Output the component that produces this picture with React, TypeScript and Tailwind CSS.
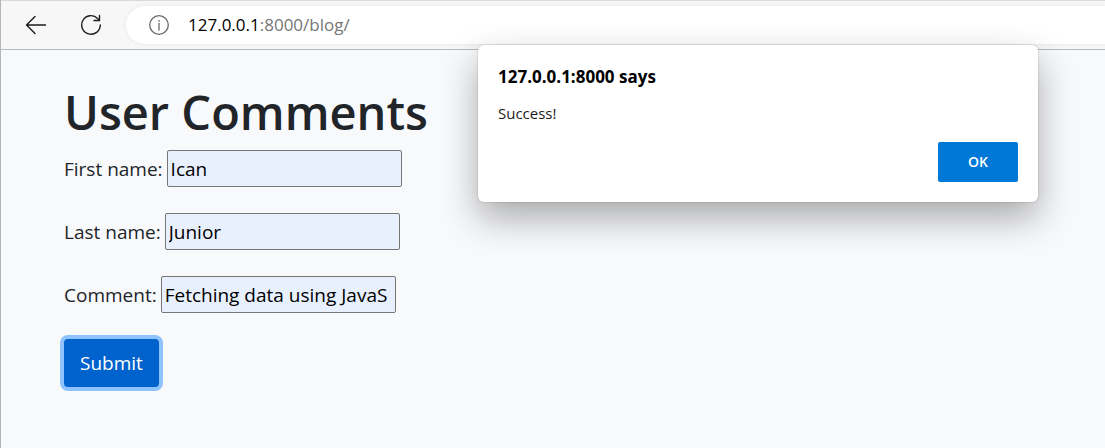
import type { ReactNode } from "react";

function ToolbarButton({ label, children }: { label: string; children: ReactNode }) {
  return (
    <button
      type="button"
      aria-label={label}
      className="flex size-8 items-center justify-center text-[#1b1b1b]"
    >
      {children}
    </button>
  );
}

function Toolbar() {
  return (
    <header className="flex h-[50px] items-center border-t border-b border-t-[#d9d9d9] border-b-[#b9babd] bg-[#f7f7f7] pl-[19px]">
      <div className="flex gap-[23px]">
        <ToolbarButton label="Back">
          <svg
            width="22"
            height="20"
            viewBox="0 0 22 20"
            fill="none"
            stroke="currentColor"
            strokeWidth="1.4"
            strokeLinecap="round"
            strokeLinejoin="round"
          >
            <path d="M20.5 10H1.5M10 1.5L1.5 10L10 18.5" />
          </svg>
        </ToolbarButton>
        <ToolbarButton label="Refresh">
          <svg
            width="22"
            height="22"
            viewBox="0 0 22 22"
            fill="none"
            stroke="currentColor"
            strokeWidth="1.4"
            strokeLinecap="round"
            strokeLinejoin="round"
          >
            <path d="M20.3 11A9.3 9.3 0 1 1 17.6 4.4L19.4 6.4" />
            <path d="M19.5 1.5V6.5H14" />
          </svg>
        </ToolbarButton>
      </div>
      <div className="ml-[19px] flex h-[38px] flex-1 items-center gap-[18px] rounded-l-full bg-white pl-[22px] shadow-[0_0_4px_rgba(0,0,0,0.07)]">
        <svg
          width="22"
          height="22"
          viewBox="0 0 22 22"
          fill="none"
          stroke="#6b6b6b"
          strokeWidth="1.3"
          aria-hidden="true"
        >
          <circle cx="11" cy="11" r="9.3" />
          <path d="M11 9.5V16" strokeLinecap="round" />
          <circle cx="11" cy="6.8" r="0.9" fill="#6b6b6b" stroke="none" />
        </svg>
        <p className="text-[17px] leading-6 text-[#767676]">
          <span className="text-black">127.0.0.1</span>:8000/blog/
        </p>
      </div>
    </header>
  );
}

function Field({ id, label, value }: { id: string; label: string; value: string }) {
  return (
    <div className="flex items-center gap-1">
      <label htmlFor={id} className="text-[19px] leading-7 text-[#212529]">
        {label}
      </label>
      <input
        id={id}
        name={id}
        type="text"
        defaultValue={value}
        className="h-[37px] w-[235px] rounded-[2px] border border-[#767676] bg-[#e8f0fe] px-[3px] text-[19px] text-black outline-none"
      />
    </div>
  );
}

function AlertDialog() {
  return (
    <div
      role="alertdialog"
      aria-labelledby="alert-title"
      aria-describedby="alert-message"
      className="absolute top-[45px] left-[477px] flex w-[560px] flex-col rounded-md bg-white p-5 shadow-[0_0_2px_rgba(0,0,0,0.25),0_16px_36px_rgba(0,0,0,0.32)]"
    >
      <h2 id="alert-title" className="text-[17px] leading-6 font-bold text-black">
        127.0.0.1:8000 says
      </h2>
      <p id="alert-message" className="mt-3 text-[15px] leading-6 text-[#1b1b1b]">
        Success!
      </p>
      <button
        type="button"
        className="mt-[17px] h-10 w-20 self-end rounded-[2px] bg-[#0078d7] text-sm font-semibold text-white"
      >
        OK
      </button>
    </div>
  );
}

export default function App() {
  return (
    <div className="relative flex min-h-screen flex-col overflow-hidden border-l border-[#b4b5b8] bg-[#f8f9fb] font-['Open_Sans','Noto_Sans',sans-serif]">
      <Toolbar />
      <main className="px-[63px] pt-8">
        <h1 className="text-[47px] leading-[60px] font-semibold text-[#212529]">User Comments</h1>
        <form className="mt-2 flex flex-col items-start gap-[26px]" onSubmit={(e) => e.preventDefault()}>
          <Field id="first-name" label="First name:" value="Ican" />
          <Field id="last-name" label="Last name:" value="Junior" />
          <Field id="comment" label="Comment:" value="Fetching data using JavaS" />
          <button
            type="submit"
            className="h-12 rounded-[4px] bg-[#0062cc] px-4 text-[19px] text-white ring-4 ring-[#8ec3ff]"
          >
            Submit
          </button>
        </form>
      </main>
      <AlertDialog />
    </div>
  );
}
